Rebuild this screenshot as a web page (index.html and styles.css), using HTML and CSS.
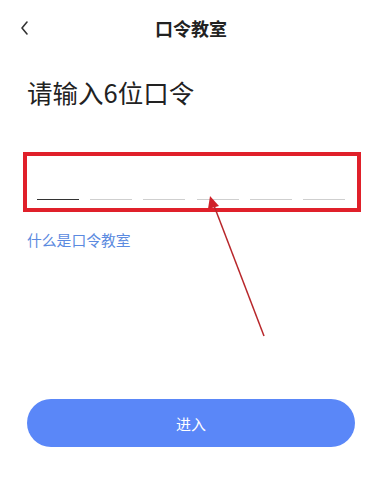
FILE: index.html
```html
<!DOCTYPE html>
<html lang="zh">
<head>
    <meta charset="UTF-8">
    <meta name="viewport" content="width=device-width, initial-scale=1.0">
    <title>口令教室</title>
    <link rel="stylesheet" href="styles.css">
</head>
<body>
    <div class="page">
        <div class="nav">
            <svg class="back" width="10" height="16" viewBox="0 0 10 16">
                <polyline points="7,2 2,8 7,14" fill="none" stroke="#333" stroke-width="1.6" stroke-linecap="round" stroke-linejoin="round"/>
            </svg>
            <span class="nav-title">口令教室</span>
        </div>

        <h1 class="heading">请输入6位口令</h1>

        <div class="code-row">
            <span class="cell active"></span>
            <span class="cell"></span>
            <span class="cell"></span>
            <span class="cell"></span>
            <span class="cell"></span>
            <span class="cell"></span>
        </div>

        <a class="help" href="#">什么是口令教室</a>

        <button class="enter">进入</button>

        <!-- 标注 -->
        <div class="mark-box"></div>
        <svg class="mark-arrow" width="382" height="480" viewBox="0 0 382 480">
            <line x1="264" y1="336" x2="213" y2="203" stroke="#b8272b" stroke-width="1.5"/>
            <polygon points="210,196 219,206 208,209" fill="#d0222a"/>
        </svg>
    </div>
</body>
</html>
```

FILE: styles.css
```css
body {
    margin: 0;
    background-color: #fff;
    font-family: "Noto Sans CJK SC", "Noto Sans", sans-serif;
    color: #222;
}
.page {
    position: relative;
    width: 382px;
    height: 480px;
    overflow: hidden;
}
.nav {
    position: relative;
    height: 56px;
    display: flex;
    align-items: center;
    justify-content: center;
}
.back {
    position: absolute;
    left: 20px;
    top: 20px;
}
.nav-title {
    font-size: 18px;
    font-weight: bold;
    color: #222;
}
.heading {
    margin: 22px 0 0 27px;
    font-size: 25.5px;
    line-height: 28px;
    font-weight: normal;
    color: #222;
}
.code-row {
    display: flex;
    justify-content: space-between;
    width: 308px;
    margin: 54px 0 0 37px;
}
.cell {
    display: block;
    width: 42px;
    height: 39px;
    border-bottom: 1px solid #cfcfcf;
}
.cell.active {
    border-bottom-color: #333;
}
.help {
    display: block;
    margin: 32px 0 0 27px;
    font-size: 14.8px;
    line-height: 16px;
    color: #5b8ae0;
    text-decoration: none;
}
.enter {
    display: block;
    width: 328px;
    height: 48px;
    margin: 151px 0 0 27px;
    border: none;
    border-radius: 24px;
    background-color: #5a87f8;
    color: #fff;
    font-family: inherit;
    font-size: 15px;
}
.mark-box {
    position: absolute;
    left: 23px;
    top: 152px;
    width: 338px;
    height: 60px;
    box-sizing: border-box;
    border: 4px solid #e0202a;
}
.mark-arrow {
    position: absolute;
    left: 0;
    top: 0;
    pointer-events: none;
}
```
